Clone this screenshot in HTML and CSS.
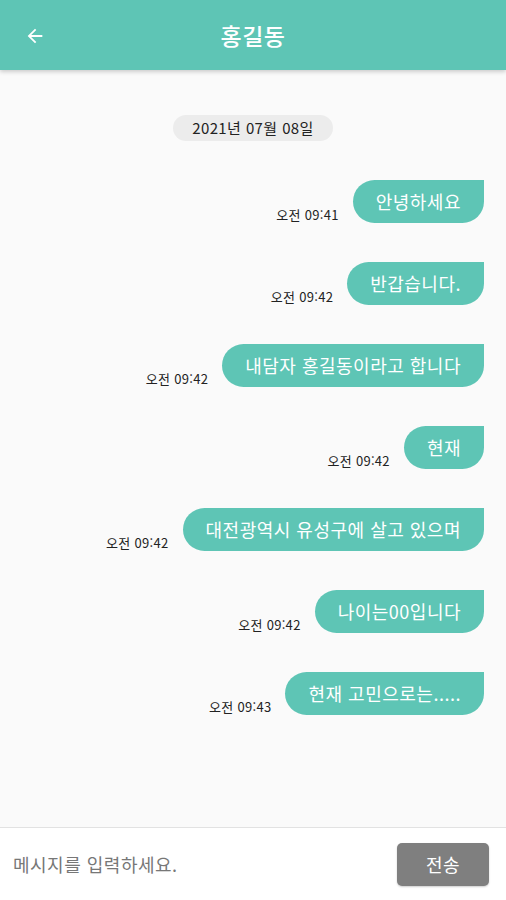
FILE: index.html
```html
<!DOCTYPE html>
<html lang="ko">
<head>
  <meta charset="UTF-8" />
  <title>홍길동</title>
  <link rel="stylesheet" href="styles.css">
</head>
<body>
  <div class="app">
    <header class="topbar">
      <span class="back">
        <svg width="22" height="22" viewBox="0 0 24 24"><path d="M20 11H7.83l5.59-5.59L12 4l-8 8 8 8 1.41-1.41L7.83 13H20v-2z" fill="#fff"/></svg>
      </span>
      <h1>홍길동</h1>
    </header>

    <main class="chat">
      <div class="date">2021년 07월 08일</div>

      <div class="msg"><span class="time">오전 09:41</span><div class="bubble">안녕하세요</div></div>
      <div class="msg"><span class="time">오전 09:42</span><div class="bubble">반갑습니다.</div></div>
      <div class="msg"><span class="time">오전 09:42</span><div class="bubble">내담자 홍길동이라고 합니다</div></div>
      <div class="msg"><span class="time">오전 09:42</span><div class="bubble">현재</div></div>
      <div class="msg"><span class="time">오전 09:42</span><div class="bubble">대전광역시 유성구에 살고 있으며</div></div>
      <div class="msg"><span class="time">오전 09:42</span><div class="bubble">나이는00입니다</div></div>
      <div class="msg"><span class="time">오전 09:43</span><div class="bubble">현재 고민으로는.....</div></div>
    </main>

    <footer class="composer">
      <div class="placeholder">메시지를 입력하세요.</div>
      <button class="send">전송</button>
    </footer>
  </div>
</body>
</html>
```

FILE: styles.css
```css
body {
  margin: 0;
  background: #fafafa;
  font-family: 'Noto Sans CJK KR', 'Noto Sans', sans-serif;
}
.app {
  height: 900px;
  display: flex;
  flex-direction: column;
}
.topbar {
  height: 70px;
  flex: none;
  background: #5ec5b5;
  box-shadow: 0 2px 4px rgba(0,0,0,0.18);
  display: flex;
  align-items: center;
  justify-content: center;
  position: relative;
}
.back {
  position: absolute;
  left: 24px;
  top: 25px;
  width: 22px;
  height: 22px;
}
.topbar h1 {
  margin: 0;
  color: #fff;
  font-size: 23px;
  font-weight: 500;
  letter-spacing: 0.5px;
}
.chat {
  flex: 1;
  padding: 45px 22px 0 22px;
  display: flex;
  flex-direction: column;
  align-items: flex-end;
}
.date {
  align-self: center;
  background: #ececec;
  color: #222;
  font-size: 15px;
  letter-spacing: 0.4px;
  line-height: 26px;
  padding: 0 19px;
  border-radius: 13px;
  margin-bottom: 39px;
}
.msg {
  display: flex;
  align-items: flex-end;
  gap: 14px;
  margin-bottom: 39px;
}
.time {
  font-size: 13px;
  letter-spacing: 0.3px;
  color: #222;
  line-height: 16px;
}
.bubble {
  background: #5ec5b5;
  color: #fff;
  font-size: 18px;
  letter-spacing: 0.5px;
  line-height: 43px;
  padding: 0 23px;
  border-radius: 22px 0 22px 22px;
}
.composer {
  height: 72px;
  flex: none;
  background: #fff;
  border-top: 1px solid #e2e2e2;
  display: flex;
  align-items: center;
  justify-content: space-between;
  padding: 0 17px 0 13px;
}
.placeholder {
  color: #777;
  font-size: 18px;
  letter-spacing: 0.5px;
}
.send {
  width: 92px;
  height: 43px;
  border: none;
  border-radius: 5px;
  background: #7f7f7f;
  color: #fff;
  font-family: inherit;
  font-size: 18px;
  letter-spacing: 0.5px;
  box-shadow: 0 1px 2px rgba(0,0,0,0.2);
}
```
